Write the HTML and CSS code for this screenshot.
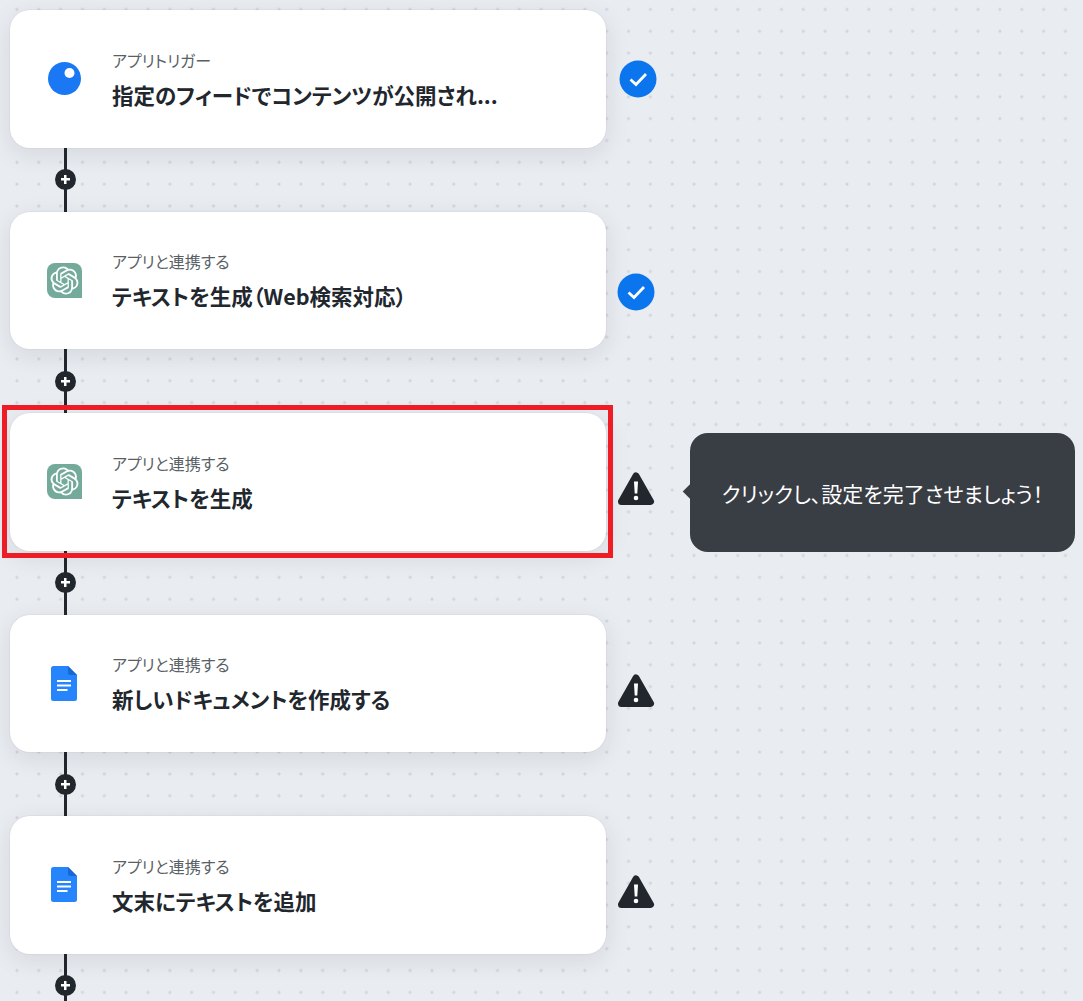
FILE: index.html
```html
<!DOCTYPE html>
<html lang="ja">
<head>
    <meta charset="UTF-8">
    <title>フローボット</title>
    <link rel="stylesheet" href="styles.css">
</head>
<body>
    <svg class="defs" width="0" height="0">
        <symbol id="i-openai" viewBox="0 0 35 35">
            <path d="M8 0H27A8 8 0 0 1 35 8V35H8A8 8 0 0 1 0 27V8A8 8 0 0 1 8 0Z" fill="#74aa9c"/>
            <path transform="translate(3.5 3.5) scale(1.1667)" fill="#fff" d="M22.2819 9.8211a5.9847 5.9847 0 0 0-.5157-4.9108 6.0462 6.0462 0 0 0-6.5098-2.9A6.0651 6.0651 0 0 0 4.9807 4.1818a5.9847 5.9847 0 0 0-3.9977 2.9 6.0462 6.0462 0 0 0 .7427 7.0966 5.98 5.98 0 0 0 .511 4.9107 6.051 6.051 0 0 0 6.5146 2.9001A5.9847 5.9847 0 0 0 13.2599 24a6.0557 6.0557 0 0 0 5.7718-4.2058 5.9894 5.9894 0 0 0 3.9977-2.9001 6.0557 6.0557 0 0 0-.7475-7.0729zm-9.022 12.6081a4.4755 4.4755 0 0 1-2.8764-1.0408l.1419-.0804 4.7783-2.7582a.7948.7948 0 0 0 .3927-.6813v-6.7369l2.02 1.1686a.071.071 0 0 1 .038.052v5.5826a4.504 4.504 0 0 1-4.4945 4.4944zm-9.6607-4.1254a4.4708 4.4708 0 0 1-.5346-3.0137l.142.0852 4.783 2.7582a.7712.7712 0 0 0 .7806 0l5.8428-3.3685v2.3324a.0804.0804 0 0 1-.0332.0615L9.74 19.9502a4.4992 4.4992 0 0 1-6.1408-1.6464zM2.3408 7.8956a4.485 4.485 0 0 1 2.3655-1.9728V11.6a.7664.7664 0 0 0 .3879.6765l5.8144 3.3543-2.0201 1.1685a.0757.0757 0 0 1-.071 0l-4.8303-2.7865A4.504 4.504 0 0 1 2.3408 7.872zm16.5963 3.8558L13.1038 8.364 15.1192 7.2a.0757.0757 0 0 1 .071 0l4.8303 2.7913a4.4944 4.4944 0 0 1-.6765 8.1042v-5.6772a.79.79 0 0 0-.407-.667zm2.0107-3.0231l-.142-.0852-4.7735-2.7818a.7759.7759 0 0 0-.7854 0L9.409 9.2297V6.8974a.0662.0662 0 0 1 .0284-.0615l4.8303-2.7866a4.4992 4.4992 0 0 1 6.6802 4.66zM8.3065 12.863l-2.02-1.1638a.0804.0804 0 0 1-.038-.0567V6.0742a4.4992 4.4992 0 0 1 7.3757-3.4537l-.142.0805L8.704 5.459a.7948.7948 0 0 0-.3927.6813zm1.0976-2.3654l2.602-1.4998 2.6069 1.4998v2.9994l-2.5974 1.4997-2.6067-1.4997Z"/>
        </symbol>
        <symbol id="i-docs" viewBox="0 0 26 35">
            <path d="M2.5 0H17L26 9V32.5A2.5 2.5 0 0 1 23.5 35H2.5A2.5 2.5 0 0 1 0 32.5V2.5A2.5 2.5 0 0 1 2.5 0Z" fill="#2684fc"/>
            <path d="M17 0V6.5A2.5 2.5 0 0 0 19.5 9H26Z" fill="#1967d2"/>
            <path d="M6 14H20V16H6ZM6 18.500H20V20.500H6ZM6 23H16.500V25H6Z" fill="#fff"/>
        </symbol>
        <symbol id="i-check" viewBox="0 0 38 38">
            <circle cx="19" cy="19" r="18.5" fill="#0a75ec"/>
            <path d="M11.500 19.500L17 24.500L27 14" fill="none" stroke="#fff" stroke-width="2.800"/>
        </symbol>
        <symbol id="i-warn" viewBox="0 0 38 34">
            <path d="M19 4L33.500 29.500H4.500Z" fill="#22272e" stroke="#22272e" stroke-width="7" stroke-linejoin="round"/>
            <path d="M17 9.500H21L20.300 21.500H17.700Z" fill="#fff"/>
            <circle cx="19" cy="26" r="2.300" fill="#fff"/>
        </symbol>
    </svg>

    <main class="flow">
        <section class="step">
            <div class="card">
                <svg class="app-icon" width="35" height="35" viewBox="0 0 35 35">
                    <circle cx="17.500" cy="17.500" r="16.500" fill="#1b78f5"/>
                    <circle cx="22.500" cy="12" r="5" fill="#fff"/>
                </svg>
                <div class="card-text">
                    <div class="card-label">アプリトリガー</div>
                    <div class="card-title">指定のフィードでコンテンツが公開され...</div>
                </div>
            </div>
            <svg class="status status-done status-first"><use href="#i-check"/></svg>
        </section>
        <div class="connector"><span class="add"></span></div>

        <section class="step">
            <div class="card">
                <svg class="app-icon" width="35" height="35"><use href="#i-openai"/></svg>
                <div class="card-text">
                    <div class="card-label">アプリと連携する</div>
                    <div class="card-title">テキストを生成（Web検索対応）</div>
                </div>
            </div>
            <svg class="status status-done status-second"><use href="#i-check"/></svg>
        </section>
        <div class="connector"><span class="add"></span></div>

        <section class="step step-active">
            <div class="card">
                <svg class="app-icon" width="35" height="35"><use href="#i-openai"/></svg>
                <div class="card-text">
                    <div class="card-label">アプリと連携する</div>
                    <div class="card-title">テキストを生成</div>
                </div>
            </div>
            <svg class="status status-warn"><use href="#i-warn"/></svg>
            <div class="tooltip">クリックし、設定を完了させましょう！</div>
        </section>
        <div class="connector"><span class="add"></span></div>

        <section class="step">
            <div class="card">
                <svg class="app-icon" width="35" height="35"><use href="#i-docs" width="26" height="35" x="4"/></svg>
                <div class="card-text">
                    <div class="card-label">アプリと連携する</div>
                    <div class="card-title">新しいドキュメントを作成する</div>
                </div>
            </div>
            <svg class="status status-warn"><use href="#i-warn"/></svg>
        </section>
        <div class="connector"><span class="add"></span></div>

        <section class="step">
            <div class="card">
                <svg class="app-icon" width="35" height="35"><use href="#i-docs" width="26" height="35" x="4"/></svg>
                <div class="card-text">
                    <div class="card-label">アプリと連携する</div>
                    <div class="card-title">文末にテキストを追加</div>
                </div>
            </div>
            <svg class="status status-warn"><use href="#i-warn"/></svg>
        </section>
        <div class="connector"><span class="add"></span></div>
    </main>
</body>
</html>
```

FILE: styles.css
```css
html, body {
    margin: 0;
    padding: 0;
    height: 100%;
    overflow: hidden;
}
body {
    font-family: "Noto Sans CJK JP", "Noto Sans", sans-serif;
    font-feature-settings: "palt";
    background-color: #e9ecf1;
    background-image: radial-gradient(circle, #d2d5db 1.3px, transparent 1.8px);
    background-size: 21.85px 21.85px;
    background-position: 6px -1.5px;
    color: #22272e;
}
.defs {
    display: block;
    height: 0;
}
.flow {
    display: flex;
    flex-direction: column;
    padding: 10px 0 0 10px;
}
.step {
    display: flex;
    align-items: center;
    height: 137.5px;
    position: relative;
}
.card {
    display: flex;
    align-items: center;
    width: 596px;
    height: 100%;
    padding-left: 37px;
    box-sizing: border-box;
    background-color: #fff;
    border-radius: 20px;
    box-shadow: 0 0 0 1px rgba(34, 39, 46, 0.03), 0 6px 24px rgba(34, 39, 46, 0.1);
}
.app-icon {
    flex: none;
}
.card-text {
    margin-left: 30px;
    margin-top: -1px;
}
.card-label {
    font-size: 16px;
    line-height: 22px;
    color: #5a5f66;
}
.card-title {
    margin-top: 11px;
    font-size: 21.5px;
    line-height: 26px;
    font-weight: 700;
}
.status {
    flex: none;
    width: 38px;
    height: 38px;
}
.status-done {
    margin-left: 11px;
}
.status-first {
    margin-left: 13px;
}
.status-second {
    margin-top: 23px;
}
.status-warn {
    width: 38px;
    height: 34px;
    margin-left: 11px;
    margin-top: 15px;
}
.step-active::after {
    content: "";
    position: absolute;
    left: -8px;
    top: -8px;
    width: 601px;
    height: 143px;
    border: 5px solid #ee1c25;
    pointer-events: none;
}
.tooltip {
    position: absolute;
    left: 680px;
    top: 20px;
    width: 385px;
    height: 119px;
    display: flex;
    align-items: center;
    justify-content: center;
    background-color: #393d44;
    border-radius: 18px;
    color: #fff;
    font-size: 21px;
}
.tooltip::before {
    content: "";
    position: absolute;
    left: -5px;
    top: 53px;
    width: 11px;
    height: 11px;
    background-color: #393d44;
    transform: rotate(45deg);
}
.connector {
    display: flex;
    align-items: center;
    width: 21px;
    height: 64px;
    margin-left: 45px;
    background: linear-gradient(#22272e, #22272e) center / 3px 100% no-repeat;
}
.add {
    position: relative;
    width: 21px;
    height: 21px;
    border-radius: 50%;
    background:
        linear-gradient(#fff, #fff) center / 9px 2.5px no-repeat,
        linear-gradient(#fff, #fff) center / 2.5px 9px no-repeat,
        #22272e;
}
```
